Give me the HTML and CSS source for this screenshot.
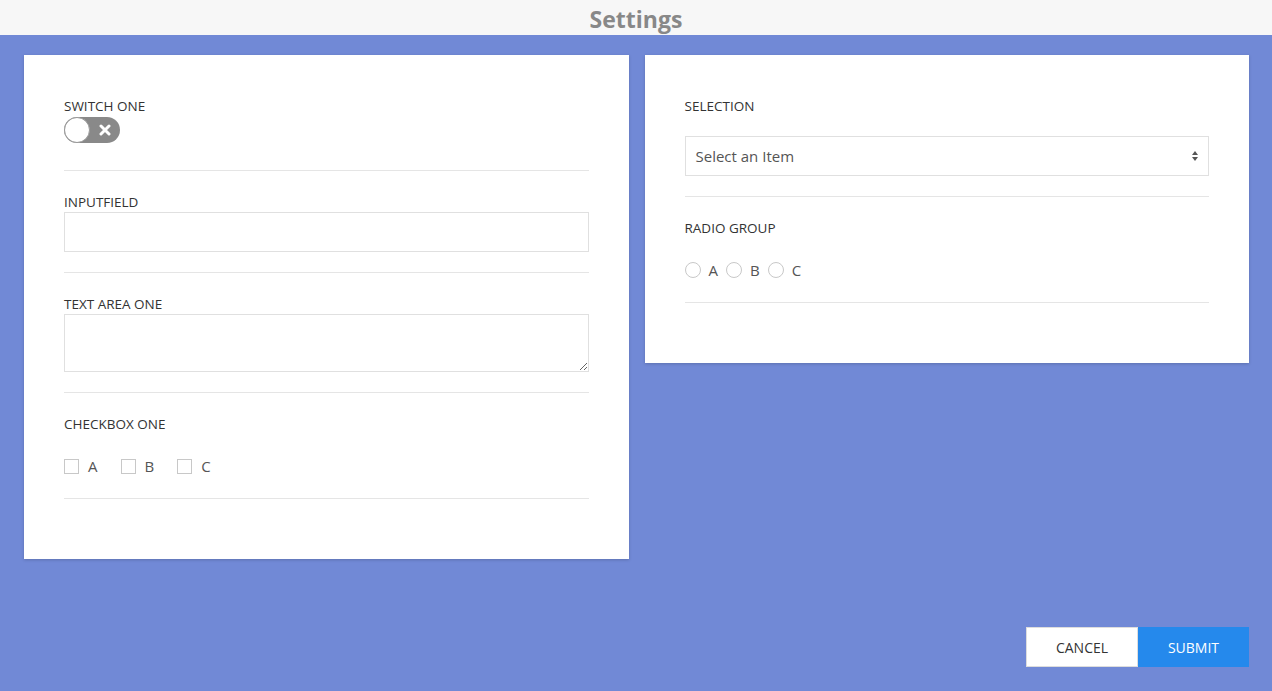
FILE: index.html
```html
<!DOCTYPE html>
<html>
<head>
<meta charset="utf-8">
<title>Settings</title>
<link rel="stylesheet" href="styles.css">
</head>
<body>
<div class="page">
  <header class="topbar"><h1 class="title">Settings</h1></header>
  <main class="cards">
    <section class="card">
      <div class="row row-switch">
        <div class="label">SWITCH ONE</div>
        <div class="switch">
          <span class="knob"></span>
          <svg class="switch-x" width="12" height="12" viewBox="0 0 12 12"><path d="M2 2 L10 10 M10 2 L2 10" stroke="#fff" stroke-width="3" stroke-linecap="round"/></svg>
        </div>
      </div>
      <div class="row">
        <div class="label">INPUTFIELD</div>
        <input class="input" type="text">
      </div>
      <div class="row">
        <div class="label">TEXT AREA ONE</div>
        <textarea class="textarea"></textarea>
      </div>
      <div class="row row-choices row-checks">
        <div class="label">CHECKBOX ONE</div>
        <div class="choices">
          <label class="choice"><span class="box"></span>A</label>
          <label class="choice"><span class="box"></span>B</label>
          <label class="choice"><span class="box"></span>C</label>
        </div>
      </div>
    </section>
    <section class="card">
      <div class="row row-select">
        <div class="label">SELECTION</div>
        <div class="select">
          <span>Select an Item</span>
          <svg class="arrows" width="8" height="12" viewBox="0 0 8 12"><path d="M4 1 L7 5 L1 5 Z M4 11 L7 7 L1 7 Z" fill="#555"/></svg>
        </div>
      </div>
      <div class="row row-choices row-radios">
        <div class="label">RADIO GROUP</div>
        <div class="choices radios">
          <label class="choice"><span class="circle"></span>A</label>
          <label class="choice"><span class="circle"></span>B</label>
          <label class="choice"><span class="circle"></span>C</label>
        </div>
      </div>
    </section>
  </main>
  <footer class="actions">
    <button class="btn btn-cancel">CANCEL</button>
    <button class="btn btn-submit">SUBMIT</button>
  </footer>
</div>
</body>
</html>
```
FILE: styles.css
```css
html, body {
  margin: 0;
  padding: 0;
}
body {
  font-family: "Open Sans", "Noto Sans", sans-serif;
  background: #7189d6;
  color: #333;
}
.page {
  min-height: 100vh;
  display: flex;
  flex-direction: column;
}
.topbar {
  height: 35px;
  background: #f7f7f7;
  display: flex;
  align-items: center;
  justify-content: center;
}
.title {
  margin: 3px 0 0;
  font-size: 23px;
  font-weight: 700;
  color: #888;
  line-height: 32px;
}
.cards {
  display: grid;
  grid-template-columns: 1fr 1fr;
  gap: 16px;
  padding: 20px 23px 0 24px;
  align-items: start;
}
.card {
  background: #fff;
  box-shadow: 0 1px 3px rgba(0,0,0,0.18);
  padding: 20px 40px 60px 40px;
}
.row {
  border-bottom: 1px solid #e5e5e5;
  padding: 22px 0 20px;
}
.label {
  font-size: 13.5px;
  line-height: 18px;
  color: #333;
}
.row-switch {
  padding-bottom: 27px;
}
.switch {
  position: relative;
  width: 56px;
  height: 26px;
  border-radius: 13px;
  background: #898989;
  margin-top: 2px;
}
.knob {
  position: absolute;
  left: 0;
  top: 0;
  width: 24px;
  height: 24px;
  border-radius: 50%;
  background: #fff;
  border: 1px solid #999;
}
.switch-x {
  position: absolute;
  right: 9px;
  top: 7px;
}
.input {
  display: block;
  box-sizing: border-box;
  width: 100%;
  height: 40px;
  border: 1px solid #e0e0e0;
  margin: 1px 0 0;
  padding: 0 10px;
  font: inherit;
  outline: none;
}
.textarea {
  display: block;
  box-sizing: border-box;
  width: 100%;
  height: 58px;
  border: 1px solid #e0e0e0;
  margin: 1px 0 0;
  padding: 6px 10px;
  font: inherit;
  resize: vertical;
  outline: none;
}
.row-choices {
  padding-bottom: 24px;
}
.row-checks {
  padding-bottom: 23px;
}
.row-radios {
  padding-bottom: 23px;
}
.choices {
  display: flex;
  gap: 23px;
  margin-top: 24px;
  font-size: 15px;
  color: #555;
}
.radios {
  gap: 8px;
}
.choice {
  display: flex;
  align-items: center;
  gap: 9px;
  line-height: 18px;
}
.box {
  box-sizing: border-box;
  width: 15px;
  height: 15px;
  border: 1px solid #c8c8c8;
}
.circle {
  box-sizing: border-box;
  width: 16px;
  height: 16px;
  border: 1px solid #c8c8c8;
  border-radius: 50%;
  margin-right: -1px;
}
.row-select .select {
  margin-top: 21px;
}
.select {
  box-sizing: border-box;
  height: 40px;
  border: 1px solid #e0e0e0;
  display: flex;
  align-items: center;
  justify-content: space-between;
  padding: 0 9px 0 10px;
  font-size: 15px;
  color: #555;
}
.actions {
  margin-top: auto;
  display: flex;
  justify-content: flex-end;
  padding: 0 23px 24px 0;
}
.btn {
  height: 40px;
  font: inherit;
  font-size: 14px;
  border: none;
  cursor: pointer;
}
.btn-cancel {
  background: #fff;
  color: #333;
  border: 1px solid #ddd;
  width: 112px;
}
.btn-submit {
  background: #2589ec;
  color: #fff;
  width: 111px;
}
```
